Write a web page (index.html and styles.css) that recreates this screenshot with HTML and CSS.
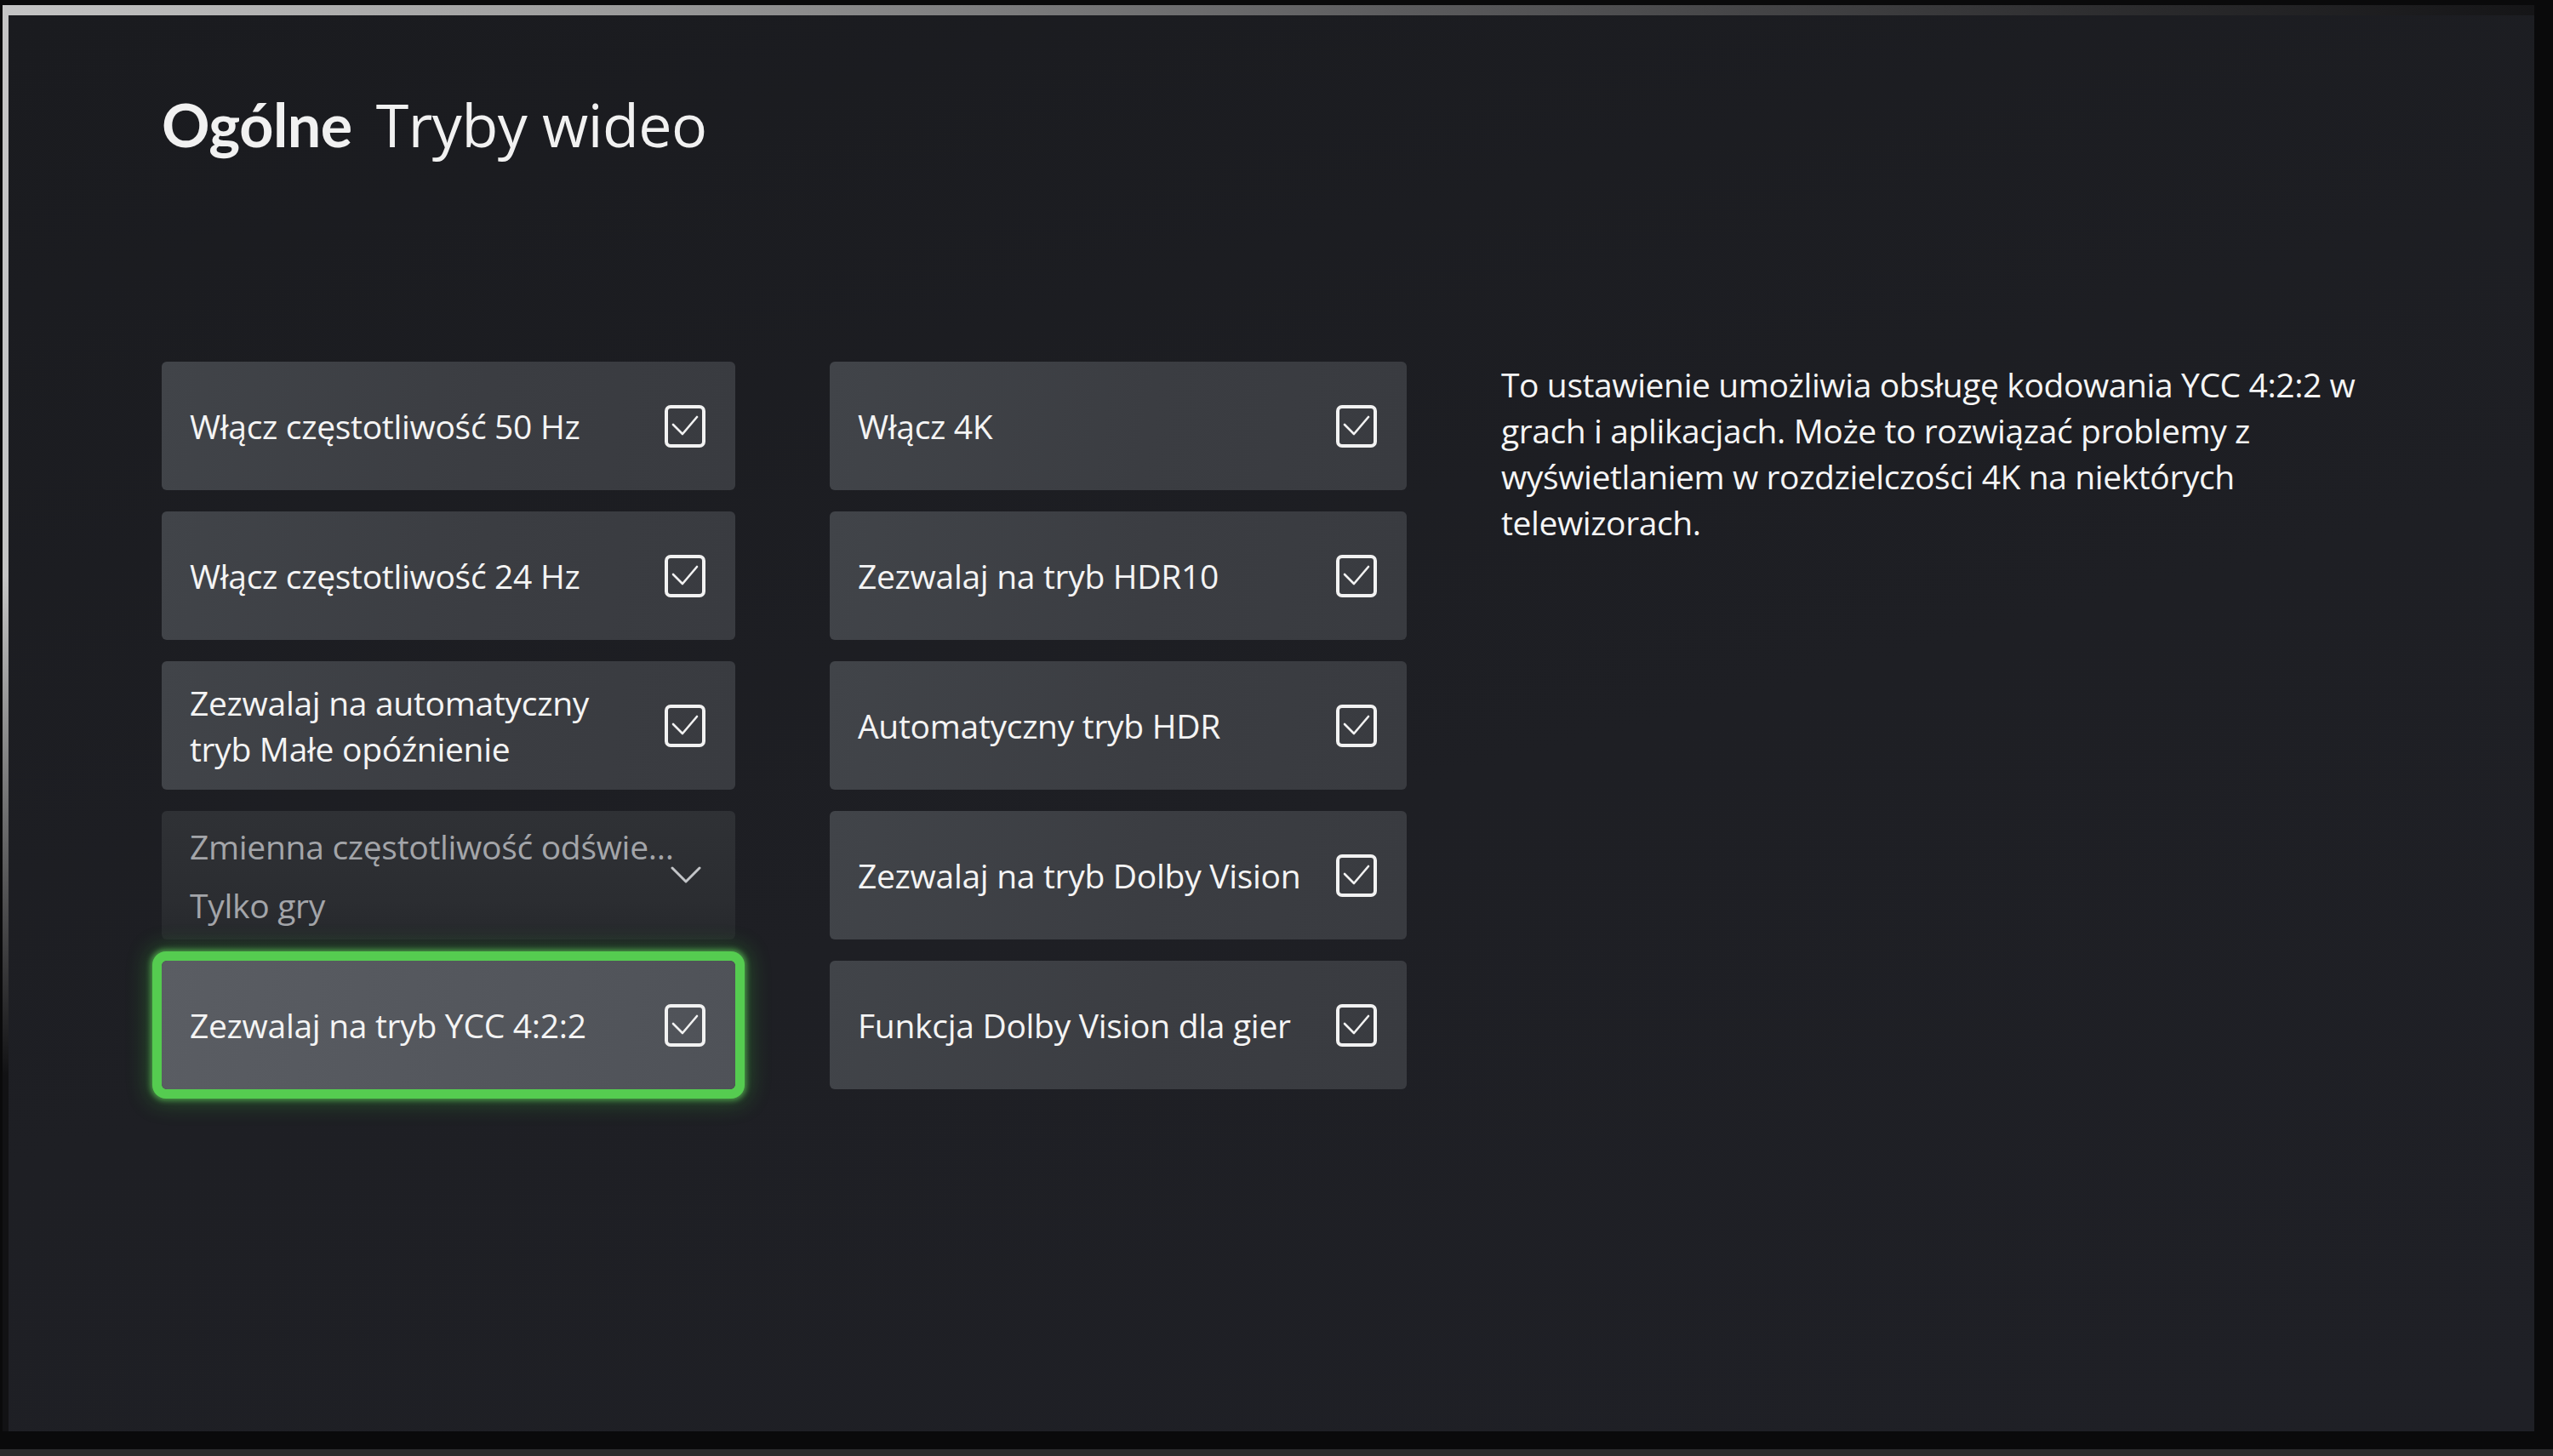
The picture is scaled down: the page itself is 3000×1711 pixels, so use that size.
FILE: index.html
```html
<!DOCTYPE html>
<html lang="pl">
<head>
    <meta charset="UTF-8">
    <meta name="viewport" content="width=device-width, initial-scale=1.0">
    <title>Ogólne - Tryby wideo</title>
    <link rel="stylesheet" href="styles.css">
</head>
<body>
    <div class="tv">
        <div class="frame">
            <main class="screen">
                <h1 class="heading">
                    <span class="heading-section">Ogólne</span>
                    <span class="heading-page">Tryby wideo</span>
                </h1>

                <div class="layout">
                    <div class="column">
                        <div class="option">
                            <span class="option-label">Włącz częstotliwość 50 Hz</span>
                            <svg class="checkbox" viewBox="0 0 48 50"><rect x="2" y="2" width="44" height="46" rx="5"/><polyline points="10,23 21,34 38,14"/></svg>
                        </div>
                        <div class="option">
                            <span class="option-label">Włącz częstotliwość 24 Hz</span>
                            <svg class="checkbox" viewBox="0 0 48 50"><rect x="2" y="2" width="44" height="46" rx="5"/><polyline points="10,23 21,34 38,14"/></svg>
                        </div>
                        <div class="option">
                            <span class="option-label">Zezwalaj na automatyczny<br>tryb Małe opóźnienie</span>
                            <svg class="checkbox" viewBox="0 0 48 50"><rect x="2" y="2" width="44" height="46" rx="5"/><polyline points="10,23 21,34 38,14"/></svg>
                        </div>
                        <div class="option option-select">
                            <div class="select-text">
                                <span class="select-label">Zmienna częstotliwość odświe...</span>
                                <span class="select-value">Tylko gry</span>
                            </div>
                            <svg class="chevron" viewBox="0 0 36 20"><polyline points="2,2 18,18 34,2"/></svg>
                        </div>
                        <div class="option is-focused">
                            <span class="option-label">Zezwalaj na tryb YCC 4:2:2</span>
                            <svg class="checkbox" viewBox="0 0 48 50"><rect x="2" y="2" width="44" height="46" rx="5"/><polyline points="10,23 21,34 38,14"/></svg>
                        </div>
                    </div>

                    <div class="column">
                        <div class="option">
                            <span class="option-label">Włącz 4K</span>
                            <svg class="checkbox" viewBox="0 0 48 50"><rect x="2" y="2" width="44" height="46" rx="5"/><polyline points="10,23 21,34 38,14"/></svg>
                        </div>
                        <div class="option">
                            <span class="option-label">Zezwalaj na tryb HDR10</span>
                            <svg class="checkbox" viewBox="0 0 48 50"><rect x="2" y="2" width="44" height="46" rx="5"/><polyline points="10,23 21,34 38,14"/></svg>
                        </div>
                        <div class="option">
                            <span class="option-label">Automatyczny tryb HDR</span>
                            <svg class="checkbox" viewBox="0 0 48 50"><rect x="2" y="2" width="44" height="46" rx="5"/><polyline points="10,23 21,34 38,14"/></svg>
                        </div>
                        <div class="option">
                            <span class="option-label">Zezwalaj na tryb Dolby Vision</span>
                            <svg class="checkbox" viewBox="0 0 48 50"><rect x="2" y="2" width="44" height="46" rx="5"/><polyline points="10,23 21,34 38,14"/></svg>
                        </div>
                        <div class="option">
                            <span class="option-label">Funkcja Dolby Vision dla gier</span>
                            <svg class="checkbox" viewBox="0 0 48 50"><rect x="2" y="2" width="44" height="46" rx="5"/><polyline points="10,23 21,34 38,14"/></svg>
                        </div>
                    </div>

                    <p class="description">
                        To ustawienie umożliwia obsługę kodowania YCC 4:2:2 w<br>
                        grach i aplikacjach. Może to rozwiązać problemy z<br>
                        wyświetlaniem w rozdzielczości 4K na niektórych<br>
                        telewizorach.
                    </p>
                </div>
            </main>
        </div>
    </div>
</body>
</html>
```

FILE: styles.css
```css
* {
    margin: 0;
    padding: 0;
    box-sizing: border-box;
}

body {
    background: #070708;
    font-family: 'Open Sans', 'Noto Sans', sans-serif;
    color: #f3f3f3;
    overflow: hidden;
}

/* TV bezel around the picture */
.tv {
    width: 3000px;
    height: 1711px;
    padding: 6px 22px 21px 3px;
    background: #0a0a0b;
    border-bottom: 8px solid #2b2b2d;
}

.frame {
    height: 100%;
    padding: 12px 0 0 7px;
    background:
        linear-gradient(180deg, rgba(0, 0, 0, 0) 40%, #121214 75%) left top / 7px 100% no-repeat,
        linear-gradient(90deg, #c4c4c4 0%, #9a9a9a 25%, #5c5c5e 55%, #2a2a2c 85%, #151517 100%);
}

.screen {
    height: 100%;
    padding: 80px 0 0 180px;
    background: linear-gradient(165deg, #1a1b1f 0%, #1e1f24 55%, #1f2026 100%);
}

.heading {
    display: flex;
    align-items: baseline;
    gap: 28px;
    font-size: 70px;
    line-height: normal;
    font-weight: 400;
    color: #f1f1f1;
}

.heading-section {
    font-family: 'Lato', sans-serif;
    font-weight: 700;
    letter-spacing: -0.5px;
}

.heading-page {
    font-family: 'Open Sans', sans-serif;
    letter-spacing: -0.5px;
}

.layout {
    display: grid;
    grid-template-columns: 674px 678px 1020px;
    column-gap: 111px;
    align-items: start;
    margin-top: 231px;
}

.column {
    display: flex;
    flex-direction: column;
    gap: 25px;
}

.option {
    display: flex;
    align-items: center;
    justify-content: space-between;
    height: 151px;
    padding: 0 35px 0 33px;
    border-radius: 6px;
    background: linear-gradient(100deg, #414449 0%, #3b3d42 55%, #393b40 100%);
    font-size: 39px;
    letter-spacing: -0.3px;
    line-height: 54px;
}

.option-label {
    color: #f4f4f4;
}

.checkbox {
    flex: none;
    width: 48px;
    height: 50px;
    fill: none;
    stroke: #f2f2f2;
}

.checkbox rect {
    stroke-width: 4;
}

.checkbox polyline {
    stroke-width: 2.6;
    stroke-linecap: round;
    stroke-linejoin: round;
}

/* dropdown row, dimmed */
.option-select {
    align-items: flex-start;
    padding-top: 15px;
    padding-right: 40px;
    background: linear-gradient(180deg, #2f3135 0%, #2b2d31 70%, #26282c 100%);
}

.select-text {
    display: flex;
    flex-direction: column;
    gap: 15px;
    min-width: 0;
    white-space: nowrap;
    color: #a3a5a9;
}

.chevron {
    flex: none;
    width: 36px;
    height: 20px;
    margin-top: 50px;
    fill: none;
    stroke: #c3c5c8;
    stroke-width: 3;
    stroke-linecap: round;
    stroke-linejoin: round;
}

/* focused row */
.option.is-focused {
    background: linear-gradient(100deg, #5a5d63 0%, #53565c 60%, #4f5258 100%);
    box-shadow:
        0 0 0 11px #55cc50,
        0 0 6px 13px rgba(110, 230, 100, 0.55),
        0 0 26px 16px rgba(60, 200, 60, 0.3);
}

.description {
    font-size: 39px;
    letter-spacing: -0.4px;
    line-height: 54px;
    color: #f5f5f5;
}
```
